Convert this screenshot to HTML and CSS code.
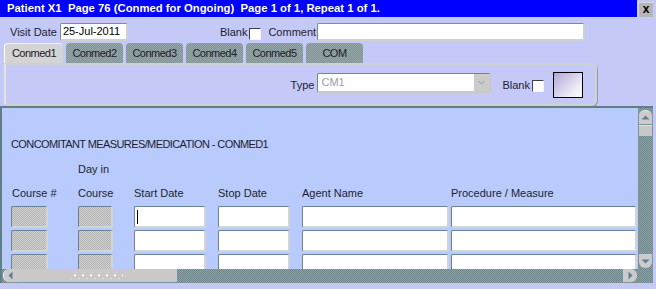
FILE: index.html
```html
<!DOCTYPE html>
<html lang="en">
<head>
  <meta charset="UTF-8">
  <title>Patient X1 Page 76 (Conmed for Ongoing)</title>
  <link rel="stylesheet" href="styles.css">
</head>
<body>

  <div class="window">
    <div class="titlebar">
      <div class="title">Patient X1  Page 76 (Conmed for Ongoing)  Page 1 of 1, Repeat 1 of 1.</div>
      <div class="close-btn">x</div>
    </div>

    <div class="visit-row">
      <span class="label">Visit Date</span>
      <div class="text-input visit-date">25-Jul-2011</div>
      <span class="label blank-label">Blank</span>
      <div class="checkbox"></div>
      <span class="label comment-label">Comment</span>
      <div class="text-input comment"></div>
    </div>

    <div class="tabs">
      <div class="tab active">Conmed1</div>
      <div class="tab">Conmed2</div>
      <div class="tab">Conmed3</div>
      <div class="tab">Conmed4</div>
      <div class="tab">Conmed5</div>
      <div class="tab">COM</div>
    </div>

    <div class="tab-panel">
      <span class="label">Type</span>
      <div class="select">
        <span class="select-value">CM1</span>
        <span class="select-arrow">
          <svg width="7" height="5" viewBox="0 0 7 5"><path d="M0.5 1 L3.5 4 L6.5 1" fill="none" stroke="#9a9a9a" stroke-width="1"/></svg>
        </span>
      </div>
      <span class="label panel-blank">Blank</span>
      <div class="checkbox panel-check"></div>
      <div class="swatch"></div>
    </div>

    <div class="scroll-frame">
      <div class="content">
        <div class="section-title">CONCOMITANT MEASURES/MEDICATION - CONMED1</div>
        <div class="grid">
          <div class="head first">Course #</div>
          <div class="head day"><span class="day-top">Day in</span><span>Course</span></div>
          <div class="head">Start Date</div>
          <div class="head">Stop Date</div>
          <div class="head">Agent Name</div>
          <div class="head">Procedure / Measure</div>

          <div class="cell locked w-course"></div>
          <div class="cell locked w-day"></div>
          <div class="cell w-date"><span class="caret"></span></div>
          <div class="cell w-date"></div>
          <div class="cell w-agent"></div>
          <div class="cell w-proc"></div>

          <div class="cell locked w-course"></div>
          <div class="cell locked w-day"></div>
          <div class="cell w-date"></div>
          <div class="cell w-date"></div>
          <div class="cell w-agent"></div>
          <div class="cell w-proc"></div>

          <div class="cell locked w-course"></div>
          <div class="cell locked w-day"></div>
          <div class="cell w-date"></div>
          <div class="cell w-date"></div>
          <div class="cell w-agent"></div>
          <div class="cell w-proc"></div>
        </div>
      </div>

      <div class="vscroll">
        <div class="sb-btn up">
          <svg width="9" height="5" viewBox="0 0 9 5"><polygon points="0.5,4.5 4.5,0.5 8.5,4.5" fill="#5f7f98"/></svg>
        </div>
        <div class="sb-thumb-v"></div>
        <div class="sb-fill"></div>
        <div class="sb-btn down">
          <svg width="9" height="5" viewBox="0 0 9 5"><polygon points="0.5,0.5 4.5,4.5 8.5,0.5" fill="#5f7f98"/></svg>
        </div>
      </div>

      <div class="hscroll">
        <div class="sb-btn left">
          <svg width="5" height="9" viewBox="0 0 5 9"><polygon points="4.5,0.5 0.5,4.5 4.5,8.5" fill="#5f7f98"/></svg>
        </div>
        <div class="sb-thumb-h"><div class="grip"></div></div>
        <div class="sb-fill"></div>
        <div class="sb-btn right">
          <svg width="5" height="9" viewBox="0 0 5 9"><polygon points="0.5,0.5 4.5,4.5 0.5,8.5" fill="#5f7f98"/></svg>
        </div>
      </div>

      <div class="corner"></div>
    </div>
  </div>

</body>
</html>
```

FILE: styles.css
```css
body {
  margin: 0;
  background: #c4c9f7;
  font-family: "Liberation Sans", Arial, sans-serif;
  font-size: 11px;
  color: #1e1e30;
}
.window {
  width: 656px;
  height: 289px;
  overflow: hidden;
}

/* title bar */
.titlebar {
  display: flex;
  height: 17px;
  background: #c4c9f7;
}
.title {
  width: 637px;
  flex-shrink: 0;
  box-sizing: border-box;
  padding-left: 7px;
  background: #0000ff;
  color: #ffffff;
  font-weight: bold;
  font-size: 11.3px;
  line-height: 17px;
  white-space: pre;
}
.close-btn {
  width: 15px;
  height: 15px;
  flex-shrink: 0;
  box-sizing: border-box;
  margin: 2px 0 0 1px;
  background-color: #b6b6b6;
  border-top: 1px solid #d8d8d8;
  border-left: 1px solid #d8d8d8;
  color: #000000;
  font-weight: bold;
  font-size: 12px;
  line-height: 12px;
  text-align: center;
}

/* visit date row */
.visit-row {
  display: flex;
  align-items: center;
  height: 18px;
  margin-top: 6px;
  padding-left: 10px;
}
.label {
  white-space: nowrap;
}
.text-input {
  height: 18px;
  box-sizing: border-box;
  background: #ffffff;
  border-style: solid;
  border-width: 1px 2px 2px 1px;
  border-color: #7a8e96 #d0d0d0 #d0d0d0 #7a8e96;
  border-radius: 2px;
  padding: 0 2px;
  line-height: 15px;
  color: #000000;
}
.visit-date {
  width: 68px;
  margin-left: 3px;
}
.blank-label {
  margin-left: 92px;
}
.checkbox {
  width: 12px;
  height: 12px;
  box-sizing: border-box;
  background: #ffffff;
  border-style: solid;
  border-width: 1px;
  border-color: #404048 #f4f4f4 #f4f4f4 #404048;
}
.visit-row .checkbox {
  margin: 3px 0 0 2px;
}
.comment-label {
  margin-left: 7px;
}
.comment {
  width: 268px;
  margin-left: 1px;
}

/* tabs */
.tabs {
  display: flex;
  gap: 3px;
  height: 20px;
  margin-top: 2px;
  padding-left: 4px;
}
.tab {
  width: 57px;
  height: 20px;
  box-sizing: border-box;
  border-radius: 4px 4px 0 0;
  background: repeating-conic-gradient(#98a8aa 0 25%, #7f9294 0 50%) 0 0 / 2px 2px;
  text-align: center;
  line-height: 20px;
  letter-spacing: -0.5px;
  color: #202028;
}
.tab.active {
  width: 59px;
  background: #d4d4d4;
  border-top: 1px solid #f4f4f4;
  border-left: 1px solid #ffffff;
  line-height: 19px;
}

/* tab panel */
.tab-panel {
  display: flex;
  justify-content: flex-end;
  align-items: center;
  width: 593px;
  height: 43px;
  box-sizing: border-box;
  margin-left: 4px;
  padding-right: 12px;
  border: 2px solid #d0d0d0;
  border-left-color: #e4e4e4;
  border-radius: 0 6px 6px 4px;
  box-shadow: 1px 1px 0 #8c9cb0;
}
.select {
  display: flex;
  width: 174px;
  height: 20px;
  box-sizing: border-box;
  margin-left: 3px;
  margin-top: -3px;
  background: #ffffff;
  border-style: solid;
  border-width: 1px 2px 2px 1px;
  border-color: #6f8690 #c8c8c8 #c8c8c8 #6f8690;
  border-radius: 2px;
}
.select-value {
  flex: 1;
  padding-left: 3px;
  line-height: 17px;
  color: #9c9ca4;
}
.select-arrow {
  display: flex;
  align-items: center;
  justify-content: center;
  width: 15px;
  background: #cbcbcb;
}
.panel-blank {
  margin-left: 11px;
}
.panel-check {
  margin: 2px 0 0 2px;
}
.swatch {
  width: 30px;
  height: 26px;
  box-sizing: border-box;
  margin-left: 9px;
  border: 1px solid #000000;
  background: linear-gradient(135deg, #b0a8d4 0%, #d8d0ec 45%, #f0eef6 75%, #fafafa 100%);
}

/* scrolling form area */
.scroll-frame {
  display: grid;
  grid-template-columns: 636px 15px;
  grid-template-rows: 161px 14px;
  width: 651px;
  border-top: 2px solid #5f8088;
  border-left: 2px solid #5f8088;
  background: repeating-conic-gradient(#8aa0a4 0 25%, #6e888c 0 50%) 0 0 / 2px 2px;
}
.content {
  overflow: hidden;
  padding-left: 9px;
  background: #b9cbfc;
}
.section-title {
  margin-top: 29px;
  line-height: 14px;
  letter-spacing: -0.6px;
  white-space: nowrap;
}
.grid {
  display: grid;
  grid-template-columns: 67px 56px 84px 84px 149px 186px;
  row-gap: 2px;
  margin-top: 11px;
}
.head {
  align-self: end;
  line-height: 14px;
  margin-bottom: 4px;
  white-space: nowrap;
}
.head.first {
  padding-left: 1px;
}
.head.day span {
  display: block;
}
.day-top {
  margin-bottom: 10px;
}
.cell {
  height: 22px;
  box-sizing: border-box;
  background: #ffffff;
  border-style: solid;
  border-width: 1px 2px 2px 1px;
  border-color: #6a8490 #d4d4d4 #d4d4d4 #6a8490;
  border-radius: 2px;
}
.cell.locked {
  background: repeating-conic-gradient(#d0d0d0 0 25%, #b4b4b4 0 50%) 0 0 / 2px 2px;
}
.w-course { width: 37px; }
.w-day { width: 35px; }
.w-date { width: 72px; }
.w-agent { width: 147px; }
.w-proc { width: 186px; }
.caret {
  display: block;
  width: 1px;
  height: 14px;
  margin: 3px 0 0 2px;
  background: #000000;
}

/* scrollbars */
.vscroll {
  display: flex;
  flex-direction: column;
  padding: 2px 0 1px 1px;
}
.hscroll {
  display: flex;
  padding: 0 1px 1px 1px;
}
.sb-fill {
  flex: 1;
}
.sb-btn {
  display: flex;
  align-items: center;
  justify-content: center;
  background: #cbcbcb;
}
.sb-btn.up,
.sb-btn.down {
  width: 13px;
  height: 14px;
}
.sb-btn.up { border-radius: 6px 6px 0 0; border-top: 1px solid #e8e8e8; box-sizing: border-box; }
.sb-btn.down { border-radius: 0 0 6px 6px; }
.sb-btn.left,
.sb-btn.right {
  width: 14px;
  height: 13px;
}
.sb-btn.left { border-radius: 6px 0 0 6px; border-left: 1px solid #f0f0f0; box-sizing: border-box; }
.sb-btn.right { border-radius: 0 6px 6px 0; }
.sb-thumb-v {
  width: 13px;
  height: 10px;
  margin-top: 1px;
  background: #c8c8c8;
  border-top: 1px solid #e4e4e4;
}
.sb-thumb-h {
  display: flex;
  align-items: center;
  justify-content: center;
  width: 160px;
  height: 13px;
  background: #c9c9c9;
}
.grip {
  width: 52px;
  height: 7px;
  background:
    radial-gradient(circle, #ffffff 0 1px, transparent 1.2px) 0 0 / 8px 7px,
    radial-gradient(circle, #ffffff 0 1px, transparent 1.2px) 4px 4px / 8px 7px;
  background-repeat: repeat-x;
}
```
